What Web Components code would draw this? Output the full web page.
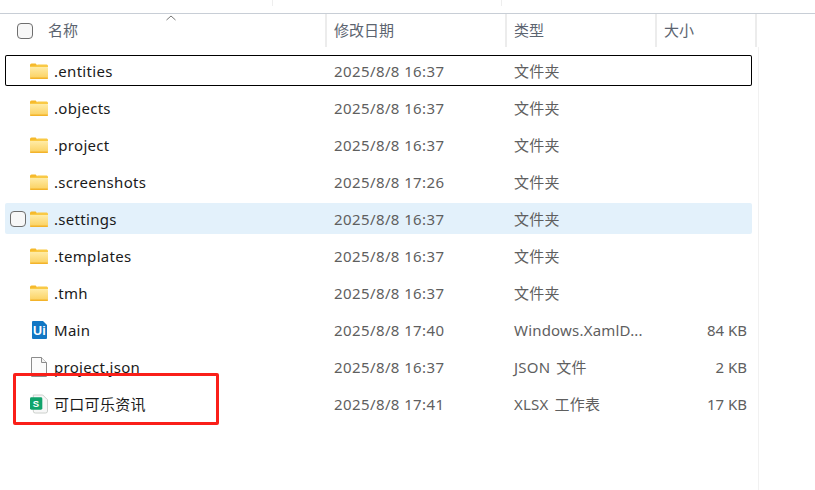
<!DOCTYPE html>
<html lang="zh">
<head>
<meta charset="utf-8">
<title>文件列表</title>
<style>
  html, body { margin: 0; background: #fff; }
</style>
</head>
<body>
<file-explorer>
  <file-row kind="folder" name=".entities" date="2025/8/8 16:37" type="文件夹" focused></file-row>
  <file-row kind="folder" name=".objects" date="2025/8/8 16:37" type="文件夹"></file-row>
  <file-row kind="folder" name=".project" date="2025/8/8 16:37" type="文件夹"></file-row>
  <file-row kind="folder" name=".screenshots" date="2025/8/8 17:26" type="文件夹"></file-row>
  <file-row kind="folder" name=".settings" date="2025/8/8 16:37" type="文件夹" hovered></file-row>
  <file-row kind="folder" name=".templates" date="2025/8/8 16:37" type="文件夹"></file-row>
  <file-row kind="folder" name=".tmh" date="2025/8/8 16:37" type="文件夹"></file-row>
  <file-row kind="xaml" name="Main" date="2025/8/8 17:40" type="Windows.XamlD..." size="84 KB"></file-row>
  <file-row kind="json" name="project.json" date="2025/8/8 16:37" type="JSON 文件" size="2 KB"></file-row>
  <file-row kind="xlsx" name="可口可乐资讯" date="2025/8/8 17:41" type="XLSX 工作表" size="17 KB"></file-row>
</file-explorer>

<script>
const FONT = `"Noto Sans", "Noto Sans CJK SC", sans-serif`;

const ICONS = {
  folder: `
    <svg width="18" height="16" viewBox="0 0 18 16">
      <defs>
        <linearGradient id="fb" x1="0" y1="0" x2="0" y2="1">
          <stop offset="0" stop-color="#ffedaa"/>
          <stop offset="1" stop-color="#fbd160"/>
        </linearGradient>
      </defs>
      <path d="M0 2q0-1.500 1.500-1.500h4.200l2 2.500h-7.700z" fill="#f6b92b"/>
      <path d="M0 3.500h16.500q1.500 0 1.500 1.500v9.500q0 1-1 1h-16q-1 0-1-1z" fill="url(#fb)"/>
      <rect x="0" y="14.500" width="18" height="1.500" rx=".7" fill="#f3b32a"/>
      <path d="M0 3l6-.2 1.700-1.300h9q1.300 0 1.300 1.500v1H0z" fill="#f9c945"/>
    </svg>`,
  xaml: `
    <svg width="16" height="18" viewBox="0 0 16 18">
      <path d="M1 1q0-1 1-1h10l4 4v13q0 1-1 1H2q-1 0-1-1z" fill="#1277c4"/>
      <text x="8.500" y="14" text-anchor="middle" font-family="Liberation Sans, sans-serif" font-size="12.500" font-weight="700" fill="#fff">Ui</text>
    </svg>`,
  json: `
    <svg width="16" height="20" viewBox="0 0 16 20">
      <path d="M.5.500h10l5 5v14h-15z" fill="#fbfbfb" stroke="#8c8c8c"/>
      <path d="M10.500.500v5h5" fill="#f3f3f3" stroke="#8c8c8c"/>
    </svg>`,
  xlsx: `
    <svg width="19" height="20" viewBox="0 0 19 20">
      <path d="M3.500.500h10l5 5v12q0 2-2 2h-11q-2 0-2-2z" fill="#f7f7f7" stroke="#c9cdc9"/>
      <rect x="0" y="3" width="13" height="13" rx="1.500" fill="#10a36b"/>
      <text x="6.500" y="13" text-anchor="middle" font-family="Liberation Sans, sans-serif" font-size="10" font-weight="700" fill="#fff">S</text>
    </svg>`
};

const CHECKBOX = `
  display: block; box-sizing: border-box; width: 16px; height: 16px;
  border: 1px solid #6e6e6e; border-radius: 4px; background: #f7f7f7;
`;

class FileRow extends HTMLElement {
  constructor() {
    super();
    this.attachShadow({ mode: 'open' });
  }

  connectedCallback() {
    const kind = this.getAttribute('kind') || 'folder';
    this.shadowRoot.innerHTML = `
      <style>
        :host {
          display: grid;
          grid-template-columns: 322px 179px 150px 96px;
          align-items: center;
          height: 31px;
          box-sizing: border-box;
          border-radius: 2px;
          font: 15px/20px ${FONT};
        }
        :host([focused]) { box-shadow: inset 0 0 0 1px #000; }
        :host([hovered]) { background: #e3f1fb; }
        .name { display: flex; align-items: center; position: relative; padding-left: 25px; color: #1a1a1a; white-space: nowrap; letter-spacing: .3px; }
        .icon { display: flex; align-items: center; justify-content: center; width: 18px; height: 20px; margin-right: 6px; }
        .box { ${CHECKBOX} position: absolute; left: 5px; top: 2px; }
        .date, .type { color: #5f5f5f; white-space: nowrap; }
        .date { padding-left: 7px; letter-spacing: .4px; }
        .type { padding-left: 8px; letter-spacing: .2px; word-spacing: 2px; }
        .size { color: #5f5f5f; text-align: right; padding-right: 5px; white-space: nowrap; }
      </style>
      <div class="name">
        ${this.hasAttribute('hovered') ? '<span class="box"></span>' : ''}
        <span class="icon">${ICONS[kind]}</span>
        <span>${this.getAttribute('name')}</span>
      </div>
      <div class="date">${this.getAttribute('date')}</div>
      <div class="type">${this.getAttribute('type')}</div>
      <div class="size">${this.getAttribute('size') || ''}</div>
    `;
  }
}

class ColumnHeader extends HTMLElement {
  constructor() {
    super();
    this.attachShadow({ mode: 'open' });
  }

  connectedCallback() {
    this.shadowRoot.innerHTML = `
      <style>
        :host {
          display: grid;
          grid-template-columns: 327px 180px 150px 100px;
          height: 33px;
          font: 15px/20px ${FONT};
          color: #5c6470;
        }
        .cell { display: flex; align-items: center; border-right: 2px solid #ececec; padding: 0 0 2px 7px; box-sizing: border-box; position: relative; }
        .cell.first { padding-left: 17px; }
        .box { ${CHECKBOX} margin: 2px 15px 0 0; }
        .sort { position: absolute; left: 166px; top: 1px; }
      </style>
      <div class="cell first">
        <span class="box"></span>名称
        <svg class="sort" width="10" height="6" viewBox="0 0 10 6"><path d="M.5 5L5 1l4.500 4" fill="none" stroke="#777" stroke-width="1"/></svg>
      </div>
      <div class="cell">修改日期</div>
      <div class="cell">类型</div>
      <div class="cell">大小</div>
    `;
  }
}

class FileExplorer extends HTMLElement {
  constructor() {
    super();
    this.attachShadow({ mode: 'open' });
  }

  connectedCallback() {
    this.shadowRoot.innerHTML = `
      <style>
        :host {
          display: block;
          position: relative;
          width: 815px;
          height: 490px;
          overflow: hidden;
          background: #fff;
        }
        .top { height: 13px; border-bottom: 1px solid #c8ced6; display: flex; box-sizing: content-box; }
        .stub { width: 1px; height: 6px; background: #eeeeee; margin-left: 272px; }
        .stub + .stub { margin-left: 228px; }
        .body { display: flex; height: 443px; }
        .list { display: flex; flex-direction: column; gap: 6px; width: 747px; margin-left: 5px; padding-top: 8px; box-sizing: border-box; }
        .rail { width: 1px; margin-left: 6px; background: #f1f1f1; }
        .mark {
          position: absolute; left: 13px; top: 373px; width: 206px; height: 52px;
          box-sizing: border-box; border: 3px solid #fa1f19; border-radius: 2px;
        }
      </style>
      <div class="top"><span class="stub"></span><span class="stub"></span></div>
      <column-header></column-header>
      <div class="body">
        <div class="list"><slot></slot></div>
        <div class="rail"></div>
      </div>
      <div class="mark"></div>
    `;
  }
}

customElements.define('file-row', FileRow);
customElements.define('column-header', ColumnHeader);
customElements.define('file-explorer', FileExplorer);
</script>
</body>
</html>
